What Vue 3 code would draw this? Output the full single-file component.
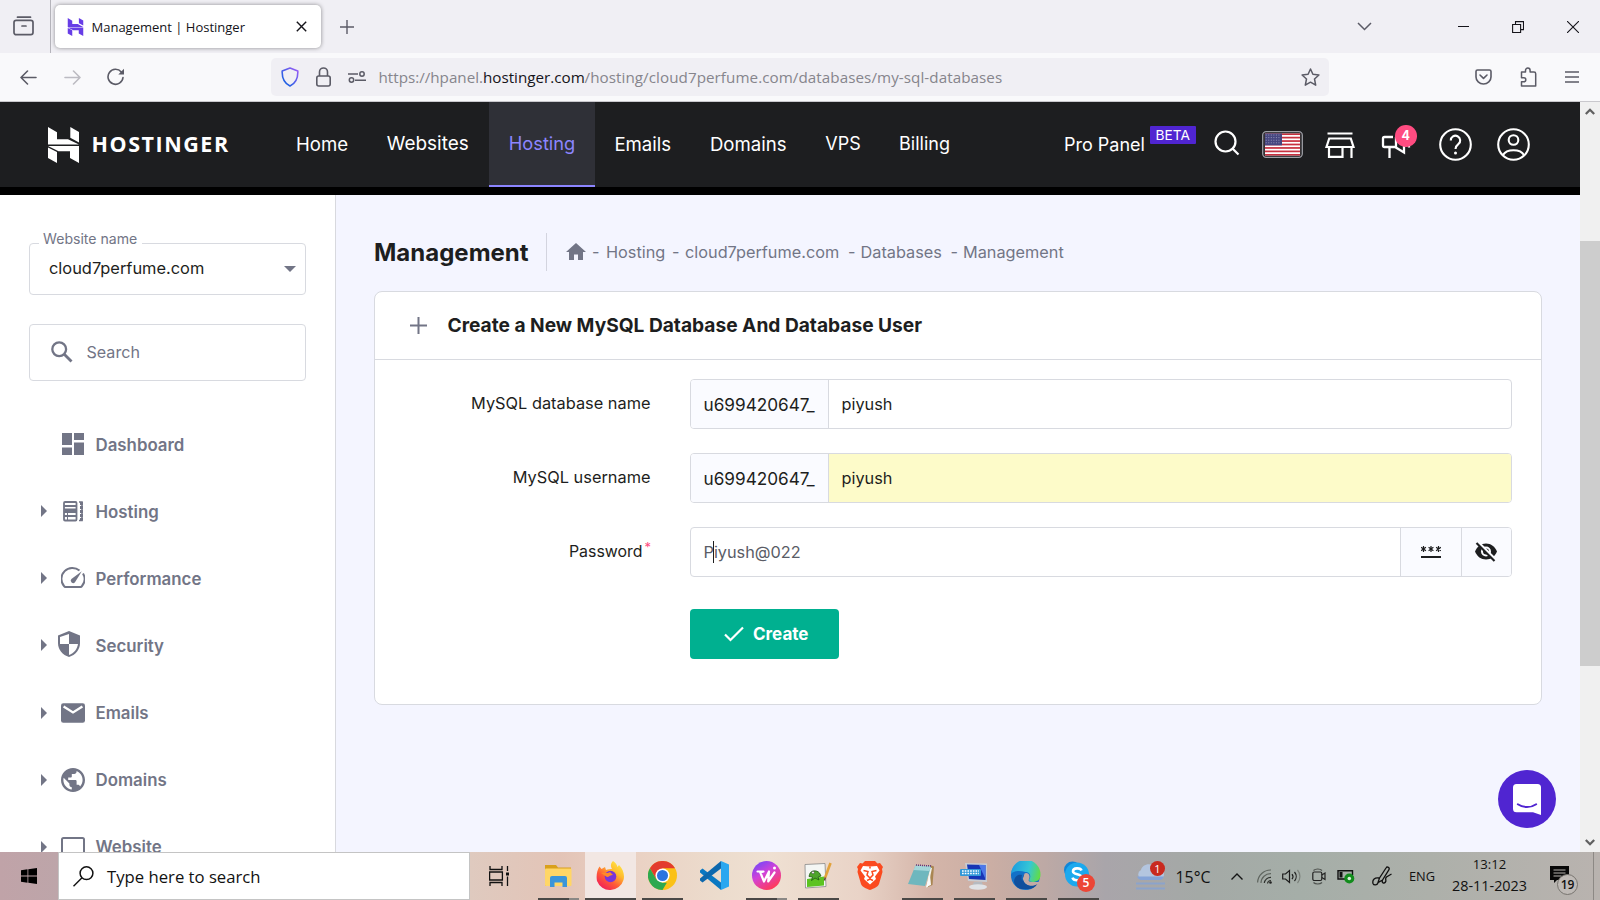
<script setup>
const navLinks = [
  { label: 'Home', width: 91 },
  { label: 'Websites', width: 120.5 },
  { label: 'Hosting', width: 106, active: true },
  { label: 'Emails', width: 95.5 },
  { label: 'Domains', width: 115.5 },
  { label: 'VPS', width: 74 },
  { label: 'Billing', width: 89 },
]
const menu = ['Dashboard', 'Hosting', 'Performance', 'Security', 'Emails', 'Domains', 'Website']
const stripes = [0, 2, 4, 6, 8, 10, 12]
</script>

<template>
  <div class="screen">
    <!-- Browser tabs -->
    <div class="tabbar">
      <div class="view-cell">
        <svg width="22" height="20" viewBox="0 0 22 20" fill="none" stroke="#5b5b66" stroke-width="1.7" stroke-linecap="round">
          <path d="M4.5 1.2h13" /><path d="M1 8V6.5A2.2 2.2 0 0 1 3.2 4.3h14.6A2.2 2.2 0 0 1 20 6.500V16.500a2.200 2.200 0 0 1-2.200 2.200H3.200A2.200 2.200 0 0 1 1 16.500z" /><path d="M9 10h4" />
        </svg>
      </div>
      <div class="tab">
        <svg class="favicon" width="17" height="18" viewBox="0 0 31 36" fill="#673de6">
          <path d="M0 0 9 5.300V12.200H20L31 18H0z" /><path d="M22.300 0 31 5V15L22.300 10.500z" /><path d="M0 20 9 24.500V36L0 31z" /><path d="M0 19H31V36L22 31V24.500H11z" />
        </svg>
        <span class="tab-title">Management | Hostinger</span>
        <svg width="11" height="11" viewBox="0 0 11 11" stroke="#15141a" stroke-width="1.400"><path d="M.8.8l9.400 9.400M10.200.8.8 10.200" /></svg>
      </div>
      <svg class="new-tab" width="14" height="14" viewBox="0 0 14 14" stroke="#5b5b66" stroke-width="1.400"><path d="M7 0v14M0 7h14" /></svg>
      <div class="window-buttons">
        <svg width="15" height="9" viewBox="0 0 15 9" fill="none" stroke="#5b5b66" stroke-width="1.500"><path d="M1 1l6.500 6.500L14 1" /></svg>
        <svg class="win-min" width="11" height="12" viewBox="0 0 11 12" stroke="#15141a"><path d="M0 5.500h11" /></svg>
        <svg width="12" height="12" viewBox="0 0 12 12" fill="none" stroke="#15141a" stroke-width="1.100"><path d="M.6 3.500h8v8h-8zM3.500 3.500V.6h8v8H8.600" /></svg>
        <svg width="12" height="12" viewBox="0 0 12 12" stroke="#15141a" stroke-width="1.100"><path d="M0 0l12 12M12 0 0 12" /></svg>
      </div>
    </div>

    <!-- Address bar -->
    <div class="toolbar">
      <svg class="nav-back" width="17" height="15" viewBox="0 0 17 15" fill="none" stroke="#5b5b66" stroke-width="1.600" stroke-linecap="round" stroke-linejoin="round"><path d="M7.500 1 1 7.500 7.500 14M1 7.500h15" /></svg>
      <svg class="nav-fwd" width="17" height="15" viewBox="0 0 17 15" fill="none" stroke="#bcbbc2" stroke-width="1.600" stroke-linecap="round" stroke-linejoin="round"><path d="M9.500 1 16 7.500 9.500 14M16 7.500H1" /></svg>
      <svg class="nav-reload" width="18" height="18" viewBox="0 0 18 18" fill="none" stroke="#5b5b66" stroke-width="1.600" stroke-linecap="round"><path d="M16 9.500A7.500 7.500 0 1 1 14.300 4" /><path d="M17 .8v5.700h-5.700z" fill="#5b5b66" stroke="none" /></svg>
      <div class="urlbox">
        <svg class="u-shield" width="18" height="20" viewBox="0 0 18 20" fill="none" stroke-width="1.600" stroke-linejoin="round">
          <defs><linearGradient id="shield" x1="0" y1="1" x2="1" y2="0"><stop offset="0" stop-color="#0060df" /><stop offset="1" stop-color="#a05cf5" /></linearGradient></defs>
          <path stroke="url(#shield)" d="M9 1 16.800 4c.3 6.500-1.500 12-7.800 15C2.700 16 .900 10.500 1.200 4z" />
        </svg>
        <svg class="u-lock" width="15" height="20" viewBox="0 0 15 20" fill="none" stroke="#5b5b66" stroke-width="1.600"><rect x=".8" y="9" width="13.400" height="10" rx="2" /><path d="M3.500 9V5a4 4 0 0 1 8 0v4" /></svg>
        <svg class="u-perm" width="18" height="12" viewBox="0 0 18 12" fill="none" stroke="#5b5b66" stroke-width="1.500"><path d="M0 3h10M7 9.300h11" /><circle cx="14" cy="3" r="2.200" /><circle cx="3.500" cy="9" r="2.200" /></svg>
        <div class="url"><span class="u1">https://hpanel.</span><b>hostinger.com</b><span class="u2">/hosting/cloud7perfume.com/databases/my-sql-databases</span></div>
        <svg class="u-star" width="19" height="19" viewBox="0 0 19 19" fill="none" stroke="#5b5b66" stroke-width="1.500" stroke-linejoin="round"><path d="M9.500 1 11.900 6.300 17.900 7 13.500 11 14.700 17.200 9.500 14.200 4.300 17.200 5.500 11 1.100 7 7.100 6.300z" /></svg>
      </div>
      <div class="tools">
        <svg width="17" height="16" viewBox="0 0 17 16" fill="none" stroke="#5b5b66" stroke-width="1.600" stroke-linecap="round" stroke-linejoin="round"><path d="M2.500 1h12A1.500 1.500 0 0 1 16 2.500V8A7.500 7 0 0 1 1 8V2.500A1.500 1.500 0 0 1 2.500 1z" /><path d="M5 6l3.500 3.400L12 6" /></svg>
        <svg width="17" height="20" viewBox="0 0 17 20" fill="none" stroke="#5b5b66" stroke-width="1.500" stroke-linejoin="round"><path d="M5.500 5V3.400a2.300 2.300 0 0 1 4.600 0V5H14a1.700 1.700 0 0 1 1.700 1.700V19H1.500v-4.200h2.300a2 2 0 0 0 0-4H1.500V5z" /></svg>
        <svg width="14" height="12" viewBox="0 0 14 12" stroke="#5b5b66" stroke-width="1.500"><path d="M0 1h14M0 6h14M0 11h14" /></svg>
      </div>
    </div>

    <!-- Page -->
    <div class="viewport">
      <div class="page">
        <header>
          <div class="brand">
            <svg width="31" height="36" viewBox="0 0 31 36" fill="#fff">
              <path d="M0 0 9 5.300V12.200H20L31 17.500H0z" /><path d="M22.300 0 31 5V15.500L22.300 10.800z" /><path d="M0 20.500 9 25V36L0 31z" /><path d="M0 19H31V36L22 31V24.200H10.500z" />
            </svg>
            <span>HOSTINGER</span>
          </div>
          <nav>
            <a v-for="l in navLinks" :key="l.label" :class="{ active: l.active }" :style="{ width: l.width + 'px' }">{{ l.label }}</a>
          </nav>
          <div class="actions">
            <span class="pro">Pro Panel</span>
            <span class="beta">BETA</span>
            <svg class="a-search" width="26" height="26" viewBox="0 0 26 26" fill="none" stroke="#fff" stroke-width="2.200"><circle cx="11.500" cy="11.500" r="10" /><path d="M18.500 18.500 24.500 24.500" /></svg>
            <svg class="a-flag" width="41" height="27" viewBox="0 0 41 27">
              <rect x=".7" y=".7" width="39.600" height="25.600" rx="3.500" fill="#1d1e20" stroke="#9d9ea5" stroke-width="1.300" />
              <svg x="2.700" y="2.300" width="35.600" height="22.400" viewBox="0 0 35 13" preserveAspectRatio="none">
                <rect width="35" height="13" fill="#fff" />
                <rect v-for="s in stripes" :key="s" :y="s" width="35" height="1" fill="#c8303f" />
                <rect width="17" height="7" fill="#46467f" />
                <path d="M1 1h15M1 2.500h15M1 4h15M1 5.500h15" stroke="#b9bad4" stroke-width=".5" stroke-dasharray="1 1.500" />
              </svg>
            </svg>
            <svg class="a-store" width="30" height="26" viewBox="0 0 30 26" fill="none" stroke="#fff" stroke-width="2.200"><path d="M2.500 1.500h25M4.200 6.500H25.800L28.500 15H1.500zM4 15v9.800h13.500V15M26.500 15v11" /></svg>
            <div class="a-mega">
              <svg width="30" height="26" viewBox="0 0 30 26" fill="none" stroke="#fff" stroke-width="2.300"><path d="M12 5H3.500A1.500 1.500 0 0 0 2 6.500v7A1.500 1.500 0 0 0 3.500 15H14l9 5.500V1M8.500 15v11M15 15V5M28 12v3.500" /></svg>
              <span>4</span>
            </div>
            <svg class="a-help" width="33" height="33" viewBox="0 0 33 33" fill="none" stroke="#fff" stroke-width="2.100"><circle cx="16.500" cy="16.500" r="15.300" /><path d="M11.800 12.500a4.700 4.700 0 1 1 7.500 3.700c-1.700 1.300-2.800 2.200-2.800 4.800" /><circle cx="16.500" cy="25" r="1.500" fill="#fff" stroke="none" /></svg>
            <svg class="a-user" width="33" height="33" viewBox="0 0 33 33" fill="none" stroke="#fff" stroke-width="2.100"><circle cx="16.500" cy="16.500" r="15.300" /><circle cx="16.500" cy="12" r="4.800" /><path d="M6 27c2-3.500 6-4.800 10.500-4.800S25 23.500 27 27" /></svg>
          </div>
        </header>

        <div class="body">
          <aside>
            <div class="select">
              <span class="legend">Website name</span>
              <span class="value">cloud7perfume.com</span>
              <svg width="12" height="6" viewBox="0 0 12 6" fill="#727586"><path d="M0 0h12L6 6z" /></svg>
            </div>
            <div class="search">
              <svg width="22" height="22" viewBox="0 0 22 22" fill="none" stroke="#727586" stroke-width="2.300"><circle cx="8.200" cy="8.200" r="6.900" /><path d="M13 13l7.500 7.500" stroke-width="2.900" /></svg>
              <span>Search</span>
            </div>
            <ul>
              <li v-for="(m, i) in menu" :key="m">
                <span class="caret"><svg v-if="i" width="6" height="12" viewBox="0 0 6 12" fill="#727586"><path d="M0 0 6 6 0 12z" /></svg></span>
                <svg v-if="i === 0" class="mi" width="24" height="24" viewBox="0 0 24 24" fill="#727586"><path d="M1 1h10v12H1zM13 1h10v7H13zM13 10.500h10V23H13zM1 15.500h10V23H1z" /></svg>
                <svg v-else-if="i === 1" class="mi" width="24" height="24" viewBox="0 0 24 24" fill="none" stroke="#727586" stroke-width="1.800"><rect x="3" y="3" width="12.500" height="18.500" rx="1" /><path d="M3 7h12.500M3 10.500h12.500M3 13h12.500M3 17h12.500" /><path d="M4 12h11" stroke-width="2.500" /><path d="M6.500 14v7" stroke-width="1" /><path d="M18 3h3v18.500h-3" stroke-width="1.600" /><path d="M20.500 3v18.500" stroke-width="3" stroke-dasharray="3 1" /></svg>
                <svg v-else-if="i === 2" class="mi" width="24" height="24" viewBox="0 0 24 24" fill="none" stroke="#727586" stroke-width="2"><path d="M18.500 4.500A11 11 0 0 0 3 20q.500 1 1.500 1H19.500q1 0 1.500-1a11 11 0 0 0 1-12.500" /><path d="M20.800 5.300 14 16.300a2.400 2.400 0 0 1-3.600-3.200z" fill="#727586" stroke="none" /></svg>
                <svg v-else-if="i === 3" class="mi shield" width="22" height="26" viewBox="0 0 22 26"><path d="M11 0 22 4.500V12c0 6.500-4.500 12-11 14C4.500 24 0 18.500 0 12V4.500z" fill="#727586" /><path d="M11 3V13H2V6z" fill="#fff" /><path d="M11 13h9c-.7 5-4 9-9 11z" fill="#fff" /></svg>
                <svg v-else-if="i === 4" class="mi" width="24" height="24" viewBox="0 0 24 24"><rect y="2.300" width="24" height="19.500" rx="2.300" fill="#727586" /><path d="M2.600 5.500 12 11.500 21.400 5.500" fill="none" stroke="#fff" stroke-width="2.300" /></svg>
                <svg v-else-if="i === 5" class="mi" width="24" height="24" viewBox="2 2 20 20" fill="#727586"><path d="M12 2C6.480 2 2 6.480 2 12s4.480 10 10 10 10-4.480 10-10S17.520 2 12 2zm-1 17.930c-3.950-.49-7-3.850-7-7.930 0-.62.080-1.210.21-1.790L9 15v1c0 1.100.9 2 2 2v1.930zm6.900-2.540c-.26-.81-1-1.390-1.900-1.390h-1v-3c0-.55-.45-1-1-1H8v-2h2c.55 0 1-.45 1-1V7h2c1.100 0 2-.9 2-2v-.41c2.930 1.190 5 4.060 5 7.410 0 2.080-.8 3.970-2.100 5.390z" /></svg>
                <svg v-else class="mi" width="24" height="24" viewBox="0 0 24 24" fill="none" stroke="#727586" stroke-width="2"><rect x="1" y="3" width="22" height="17" rx="1.500" /></svg>
                <span class="ml">{{ m }}</span>
              </li>
            </ul>
          </aside>

          <main>
            <div class="heading">
              <h1>Management</h1>
              <div class="crumbs">
                <svg width="20" height="17" viewBox="0 0 20 17" fill="#727586"><path d="M10 0 20 9H17v8H12V11.500H8V17H3V9H0z" /></svg>
                <span class="c0">-</span><span class="c1">Hosting</span><span class="c2">-</span><span class="c3">cloud7perfume.com</span><span class="c4">-</span><span class="c5">Databases</span><span class="c6">-</span><span class="c7">Management</span>
              </div>
            </div>
            <section class="card">
              <div class="card-head">
                <svg width="17" height="17" viewBox="0 0 17 17" stroke="#727586" stroke-width="2"><path d="M8.500 0v17M0 8.500h17" /></svg>
                <h2>Create a New MySQL Database And Database User</h2>
              </div>
              <div class="row">
                <label>MySQL database name</label>
                <div class="field"><span class="prefix">u699420647_</span><span class="text">piyush</span></div>
              </div>
              <div class="row">
                <label>MySQL username</label>
                <div class="field"><span class="prefix">u699420647_</span><span class="text auto">piyush</span></div>
              </div>
              <div class="row">
                <label class="req">Password<sup>*</sup></label>
                <div class="field">
                  <span class="text pw">Piyush@022<i></i></span>
                  <span class="btn gen"><svg width="20" height="13" viewBox="0 0 20 13" stroke="#1d1e20"><path stroke-width="1.200" d="M2.500 0v6M.1 1.300l4.800 3.400M4.900 1.300.1 4.700M10 0v6M7.600 1.300l4.800 3.400M12.400 1.300 7.600 4.700M17.500 0v6M15.100 1.300l4.800 3.400M19.900 1.300l-4.800 3.400" /><path d="M0 11h20" stroke-width="2" /></svg></span>
                  <span class="btn eye"><svg width="22" height="20" viewBox="0 0 22 20"><path d="M0 9.500C2 4.500 6 1.500 11 1.500s9 3 11 8c-2 5-6 8-11 8s-9-3-11-8z" fill="#1d1e20" /><circle cx="11" cy="9.500" r="5" fill="#fafbff" /><circle cx="11" cy="9.500" r="3" fill="#1d1e20" /><path d="M3 0 21 18" stroke="#fafbff" stroke-width="2.500" /><path d="M1.500 1 19.500 19" stroke="#1d1e20" stroke-width="2.200" /></svg></span>
                </div>
              </div>
              <button><svg width="20" height="16" viewBox="0 0 20 16" fill="none" stroke="#fff" stroke-width="2.200"><path d="M1 8.500 6.500 14 19 1.500" /></svg>Create</button>
            </section>
            <div class="chat">
              <svg width="28" height="31" viewBox="0 0 28 31"><path d="M3.500 0h21A3.500 3.500 0 0 1 28 3.500V31l-8-2.800H3.500A3.500 3.500 0 0 1 0 24.700V3.500A3.500 3.500 0 0 1 3.500 0z" fill="#fff" /><path d="M4.800 20.200c5.500 3.800 12.900 3.800 18.400 0" fill="none" stroke="#5025d1" stroke-width="1.900" stroke-linecap="round" /></svg>
            </div>
          </main>
        </div>
      </div>
      <div class="scrollbar">
        <svg width="10" height="7" viewBox="0 0 10 7" fill="none" stroke="#606060" stroke-width="2.300"><path d="M.8 6 5 1.800 9.200 6" /></svg>
        <div class="thumb"></div>
        <svg class="down" width="10" height="7" viewBox="0 0 10 7" fill="none" stroke="#606060" stroke-width="2.300"><path d="M.8 1 5 5.200 9.200 1" /></svg>
      </div>
    </div>

    <!-- Taskbar -->
    <footer>
      <div class="start"><svg width="16" height="16" viewBox="0 0 16 16"><path d="M0 2.200 6.500 1.300V7.600H0zM7.300 1.200 16 0V7.600H7.300zM0 8.400H6.500V14.700L0 13.800zM7.300 8.400H16V16L7.300 14.800z" /></svg></div>
      <div class="tsearch">
        <svg width="21" height="21" viewBox="0 0 21 21" fill="none" stroke="#111" stroke-width="1.500"><circle cx="13.500" cy="7.200" r="6.400" /><path d="M9 11.800.5 20.300" /></svg>
        <span>Type here to search</span>
      </div>
      <div class="app view"><svg width="20" height="20" viewBox="0 0 20 20" fill="none" stroke="#111" stroke-width="1.300"><path d="M1 0v3.500h12V0M1 20v-3.500h12V20M.6 6h12.800v8H.6zM18.500 0v5M18.500 10.500v9.500" /><rect x="17" y="6.500" width="3" height="3" fill="#111" stroke="none" /></svg></div>
      <div class="app on multi"><svg width="27" height="22" viewBox="0 0 27 22"><path d="M0 0H11l2 2.500h13V20.500H0z" fill="#d9a01c" /><rect y="3.500" width="26.500" height="17.500" rx="1" fill="#ffd666" /><path d="M5 22V13a2 2 0 0 1 2-2H20a2 2 0 0 1 2 2v9H17.500V17.500H9.500V22z" fill="#3b95d9" /></svg></div>
      <div class="app on current"><svg width="29" height="29" viewBox="0 0 29 29">
        <defs><linearGradient id="ff" x1=".9" y1="0" x2=".2" y2="1"><stop offset="0" stop-color="#fff04a" /><stop offset=".35" stop-color="#ffbd2e" /><stop offset=".65" stop-color="#ff5b36" /><stop offset="1" stop-color="#f0185c" /></linearGradient></defs>
        <path d="M17 0c3 2 4 4 4.500 6l1.500-2c4 4 6 10 4.500 15A14 14 0 0 1 1 20C0 15 1 9 3.500 5.500L5.500 8 9 6l1 3c2-1 4-1 6-1-2-3-1-6 1-8z" fill="url(#ff)" /><circle cx="14.500" cy="15.500" r="5.800" fill="#7a35d8" /><path d="M5 12c4-1 6 1 9-1l3 3c-3 0-4 2-6 2z" fill="#ff8a28" /></svg></div>
      <div class="app on"><svg width="29" height="29" viewBox="0 0 30 30"><circle cx="15" cy="15" r="15" fill="#fbc116" /><path d="M15 15 8.500 18.800 2 7.500A15 15 0 0 1 28 7.500H15z" fill="#e33b2e" /><path d="M2 7.500 8.500 18.800 15 22.500H19.500L15 30A15 15 0 0 1 2 7.500z" fill="#2da94f" /><circle cx="15" cy="15" r="7.300" fill="#fff" /><circle cx="15" cy="15" r="5.700" fill="#2d74e0" /></svg></div>
      <div class="app"><svg width="29" height="29" viewBox="0 0 29 29"><path d="M21 0 29 3.500V25.500L21 29 6 15z" fill="none" /><path d="M0 9.500 2.500 7.500 21 21.500V29L0 11.500z" fill="#0a78c2" /><path d="M0 19.500 2.500 21.500 21 7.500V0L0 17.500z" fill="#0d68ad" /><path d="M21 0 29 3.500V25.500L21 29z" fill="#2aa7f0" /></svg></div>
      <div class="app on multi"><svg width="29" height="29" viewBox="0 0 29 29"><defs><linearGradient id="wps" x1="0" y1="0" x2=".6" y2="1"><stop offset="0" stop-color="#6048ff" /><stop offset=".5" stop-color="#d142d8" /><stop offset="1" stop-color="#ff3b5c" /></linearGradient></defs><circle cx="14.500" cy="14.500" r="14.500" fill="url(#wps)" /><path d="M5.500 10.500H11.500L8.300 11.500 12 20.500 17 10.500 16.200 20.500 22.500 11.500" fill="none" stroke="#fff" stroke-width="2.200" stroke-linejoin="round" stroke-linecap="round" /><circle cx="22.500" cy="7" r="1.500" fill="#fff" /></svg></div>
      <div class="app on"><svg width="28" height="27" viewBox="0 0 28 27"><path d="M1 2.500 21 1.500 22 24.500 1.500 26z" fill="#f4f6f4" stroke="#888" stroke-width=".8" /><path d="M3 17 20 14.500V23.500L3 25z" fill="#5cc321" /><path d="M5.500 12.500c1-4 7-5 10-1.500l1.500 3-3 1 1 3-4-2-3.500 2.500 1-3.500-3.500-.5z" fill="#4ea52b" stroke="#205c14" stroke-width=".8" /><circle cx="9" cy="10.500" r="1.300" fill="#fff" stroke="#333" stroke-width=".5" /><path d="M21 16 26.500 1" stroke="#e2a23b" stroke-width="2.600" /><path d="M20.500 18.500l.7-3" stroke="#5c4630" stroke-width="1.500" /></svg></div>
      <div class="app"><svg width="26" height="29" viewBox="0 0 26 29"><path d="M8 0h10l2.500 2.500 2.500-.5 3 4-1 2 .5 3-3.500 12c-1 3-5 4.500-9 6-4-1.500-8-3-9-6L.5 11 1 8 0 6l3-4 2.500.5z" fill="#fb4a1f" /><path d="M13 5.500 20 5l2.500 4.500-4.500 6 1 2.500-6 5.500-6-5.500 1-2.500-4.500-6L6 5z" fill="#fff" /><path d="M6.500 9.500 11 10.500 10 14l3 3 3-3-1-3.500 4.500-1M10 19.500l3-1.500 3 1.500M13 5.500v2" fill="none" stroke="#fb4a1f" stroke-width="1.500" /></svg></div>
      <div class="app on"><svg width="28" height="26" viewBox="0 0 28 26"><path d="M22 2 26 3.500 24.500 22 18 25z" fill="#a98652" /><path d="M8 3 22 3 18 25 20 24 24 5z" fill="#f1f1ea" /><path d="M7.500 2.500 23 3.500 17 23 0 21z" fill="#6fb7be" /><path d="M7.500 2.500 23 3.500 21.500 8 5.500 7z" fill="#a5d6da" /><path d="M18 24l4-12 1 10z" fill="#fafafa" /><path d="M8 2 23 3" stroke="#637" stroke-width="1.500" stroke-dasharray="1 1" /></svg></div>
      <div class="app on"><svg width="28" height="28" viewBox="0 0 28 28"><path d="M5 1 27 1.500 27 20 8 19z" fill="#c8ccd2" /><path d="M7 2.500 25.500 3V18L9 17z" fill="#1736b5" /><path d="M19 3l6.500 0V17z" fill="#4c78ea" /><path d="M14 20h8l1 4H12z" fill="#b6bac0" /><ellipse cx="18" cy="25" rx="9" ry="2.700" fill="#e0e2e6" /><rect y="7" width="21" height="7" rx="1" fill="#3298d8" /><path d="M2 9h17M2 11.500h17" stroke="#fff" stroke-width="1.300" stroke-dasharray="1.700 1" /></svg></div>
      <div class="app on"><svg width="30" height="29" viewBox="0 0 30 29"><defs><linearGradient id="eg" x1="0" y1=".3" x2="1" y2=".5"><stop offset="0" stop-color="#1c9be0" /><stop offset=".6" stop-color="#35c6d6" /><stop offset="1" stop-color="#60dc4a" /></linearGradient></defs><circle cx="14.500" cy="14.500" r="14.500" fill="#1271c8" /><path d="M0 13A14.600 14.600 0 0 1 29.500 14c0 5-4 7-8 7-3 0-4-1.500-3-3 2-3 0-7-4-7C8 9 2 10 0 13z" fill="url(#eg)" /><path d="M11 14c-2 6 3 12 10 11-6 5-16 4-18-4 0-5 3-8 8-7z" fill="#0f4f9d" /><path d="M13 13c3-3 7 1 5 5-1 2 0 3 3 3h7l1 1-3 3c-7 2-15-2-14-9z" fill="#c3aba5" /><path d="M13.500 12.500C10 16 12 23 18 24.500c3 .7 6 0 8.500-1.500-4 6-13 7-17 2" fill="#0f4f9d" /></svg></div>
      <div class="app on skype"><svg width="29" height="29" viewBox="0 0 29 29"><circle cx="8.500" cy="9" r="8.500" fill="#0f86d8" /><circle cx="18" cy="18" r="8.500" fill="#0a79d0" /><circle cx="13" cy="13.500" r="12" fill="#1ba9ee" /><path d="M17.500 9.500c-1-3-8.500-3-8.500.700 0 4 8.500 2 8.500 6 0 4-8 4-9 .5" fill="none" stroke="#fff" stroke-width="2.600" /></svg><span class="sb">5</span></div>
      <div class="weather">
        <svg width="30" height="28" viewBox="0 0 30 28"><path d="M5 17a5 5 0 0 1 0-9C6 2 15 0 19 5c5-1 9 3 9 7s-2 5-4 5z" fill="#b3c5df" /><path d="M1 14.500h27a5 5 0 0 1-4 3.500H5a5 5 0 0 1-4-3.500z" fill="#84a3d8" /><path d="M0 21.500h29M0 26.500h29" stroke="#8ba3cb" stroke-width="2" /></svg>
        <span class="wb">1</span>
      </div>
      <span class="temp">15°C</span>
      <svg class="t-up" width="12" height="7" viewBox="0 0 12 7" fill="none" stroke="#151515" stroke-width="1.400"><path d="M.5 6.500 6 1l5.500 5.500" /></svg>
      <svg class="t-wifi" width="15" height="15" viewBox="0 0 15 15" fill="none" stroke="#30332f" stroke-width="1.200"><g stroke="#5f655f"><path d="M.6 13.500A13 13 0 0 1 14 1" /><path d="M4 14A9.500 9.500 0 0 1 14 4.700" /></g><path d="M7.300 14A6.500 6.500 0 0 1 14 8.300M10.500 14.500A3.500 3.500 0 0 1 14 11.500" /><circle cx="13.500" cy="13.500" r="1.300" fill="#222" stroke="none" /></svg>
      <svg class="t-vol" width="19" height="15" viewBox="0 0 19 15" fill="none" stroke="#1c1c1c" stroke-width="1.200"><path d="M.7 5H3.500L7.500 1.500V13.500L3.500 10H.7z" /><path d="M10 5a4 4 0 0 1 0 5M12.500 3a7 7 0 0 1 0 9" /><path d="M15.500 1a10 10 0 0 1 0 13" stroke="#7b817b" /></svg>
      <svg class="t-meet" width="14" height="17" viewBox="0 0 14 17" fill="none" stroke="#222" stroke-width="1.200"><rect x=".8" y="4" width="9" height="8.500" rx="1.500" /><path d="M9.800 7 13 5v6.500L9.800 9.500" /><path d="M1.500 2.500C3.500.5 8 .5 10 2.500M1.500 14.500c2 2 6.500 2 8.500 0" stroke="#4d514d" /></svg>
      <svg class="t-bat" width="18" height="15" viewBox="0 0 18 15"><path d="M15.500 6V1.700H1V10h8" fill="none" stroke="#111" stroke-width="1.400" /><path d="M2.500 3h3v5.500h-3z" fill="#111" /><circle cx="12.300" cy="9.500" r="5" fill="#128c1c" /><circle cx="12.300" cy="9.500" r="1.800" fill="#d8f0d8" /></svg>
      <svg class="t-pen" width="21" height="21" viewBox="0 0 21 21" fill="none" stroke="#111" stroke-width="1.300"><path d="M6 16.500 7.500 12 14 2a1.700 1.700 0 0 1 3 1.700L10.500 14zM7 12C3 11 0 14 1 17.500c.7 2 4 2 5-.5M10.500 14c-1 3 1.500 4 3 2 1.200-2-1-3 1-5l5-3" /></svg>
      <span class="lang">ENG</span>
      <div class="clock"><span>13:12</span><span>28-11-2023</span></div>
      <div class="notif">
        <svg width="19" height="19" viewBox="0 0 19 19"><path d="M0 0h19v14H7L4 17v-3H0z" fill="#080808" /><path d="M3.500 4h12M3.500 7h12M3.500 10h8" stroke="#b5b2ad" stroke-width="1.100" /></svg>
        <span>19</span>
      </div>
    </footer>
  </div>
</template>

<style>
body { overflow: hidden; }
</style>

<style scoped>
* { box-sizing: border-box; }
.screen { width: 1600px; height: 900px; overflow: hidden; display: flex; flex-direction: column; font-family: Inter, "Liberation Sans", sans-serif; color: #1d1e20; white-space: nowrap; }
svg { display: block; flex: none; }
.screen > div, .screen > footer { flex: none; }

.tabbar { height: 53px; background: #f0eff4; display: flex; align-items: center; }
.view-cell { width: 51px; height: 53px; border-right: 1px solid #b5b4bb; padding: 16px 0 0 13px; }
.tab { width: 266px; height: 43px; margin-left: 4px; background: #fff; border-radius: 5px; box-shadow: 0 0 4px rgba(0, 0, 0, .42); display: flex; align-items: center; padding-left: 12px; }
.tab-title { font: 13px/20px "Open Sans", sans-serif; color: #15141a; width: 204.500px; margin-left: 7.500px; }
.new-tab { margin-left: 19px; }
.window-buttons { margin-left: auto; margin-right: 21px; display: flex; align-items: center; }
.window-buttons svg + svg { margin-left: 43px; }
.window-buttons svg.win-min { margin-left: 86px; }

.toolbar { height: 49px; background: #f9f9fb; border-bottom: 1px solid #c9c8cd; display: flex; align-items: center; }
.nav-back { margin-left: 20px; }
.nav-fwd { margin-left: 26.500px; }
.nav-reload { margin-left: 26.500px; }
.urlbox { width: 1058px; height: 38px; margin-left: 146px; background: #f0eff4; border-radius: 5px; display: flex; align-items: center; padding-left: 9.500px; }
.u-lock { margin-left: 17px; }
.u-perm { margin-left: 17px; }
.url { display: flex; width: 929px; margin-left: 13px; font: 15.200px/24px "Open Sans", sans-serif; color: #86858c; }
.url span, .url b { flex: none; }
.url .u1 { width: 104.500px; }
.url b { font-weight: 400; color: #15141a; width: 101.500px; }
.url .u2 { letter-spacing: .065px; }
.u-star { margin-left: -7px; }
.tools { display: flex; align-items: center; margin-left: auto; margin-right: 21.500px; gap: 28px; }

.viewport { height: 750px; display: flex; overflow: hidden; }
.page { width: 1580px; height: 750px; overflow: hidden; }
header { height: 93px; background: #1d1e20; border-bottom: 8px solid #000; display: flex; align-items: center; }
.brand { display: flex; align-items: center; width: 276.500px; padding-left: 48px; color: #fff; }
.brand span { font: 700 21.500px/30px "Open Sans", sans-serif; letter-spacing: 1.550px; margin: -2px 0 0 12.500px; }
nav { display: flex; height: 85px; }
nav a { display: flex; align-items: center; justify-content: center; color: #fff; font-size: 18.600px; padding-bottom: 2px; }
nav a:first-child { width: 91px; }
nav a:nth-child(2) { font-size: 18.900px; }
nav a:nth-child(6), nav a:nth-child(7) { font-size: 18px; }
nav a.active { background: #2f3037; color: #8c85ff; border-bottom: 2px solid #8c85ff; font-size: 18.300px; margin-left: 1px; }
.actions { display: flex; align-items: center; height: 85px; margin-left: 94.500px; color: #fff; }
.pro { font-size: 18px; width: 86.500px; padding-left: .5px; margin-top: -1px; }
.beta { width: 45.500px; height: 18px; background: #5025d1; border-radius: 1px; font-size: 13.700px; line-height: 18px; text-align: center; margin-top: -19px; }
.a-search { margin-left: 18px; margin-top: -4px; }
.a-flag { margin-left: 22.500px; margin-top: -1px; }
.a-store { margin-left: 22px; }
.a-mega { margin-left: 26px; width: 36px; height: 26px; position: relative; }
.a-mega span { position: absolute; left: 14px; top: -6.500px; width: 21.500px; height: 21.500px; border-radius: 50%; background: #ff4c81; font-size: 12.500px; font-weight: 700; line-height: 21.500px; text-align: center; }
.a-help { margin-left: 22px; margin-top: -1px; }
.a-user { margin-left: 25px; margin-top: -1px; }

.body { display: flex; height: 657px; }
aside { width: 336px; height: 657px; overflow: hidden; border-right: 1px solid #d8d9de; background: #fff; padding: 48px 29px 0; flex: none; }
.select { position: relative; height: 52px; border: 1px solid #d8dae0; border-radius: 4px; display: flex; align-items: center; justify-content: space-between; padding: 0 9px 0 19px; }
.select .value { font-size: 16.400px; padding-bottom: 2px; }
.legend { position: absolute; left: 9px; top: -14px; background: #fff; padding: 0 5px 0 4px; font-size: 14.100px; line-height: 18px; color: #727586; }
.search { margin-top: 29px; height: 57px; border: 1px solid #d8dae0; border-radius: 4px; display: flex; align-items: center; padding-left: 21px; }
.search svg { margin-top: -1px; }
.search span { font-size: 16.100px; color: #727586; margin-left: 13.500px; padding-bottom: 2px; }
ul { list-style: none; margin: 29.500px 0 0; padding: 0; }
li { height: 67.150px; display: flex; align-items: center; color: #727586; }
.caret { width: 31.500px; padding-left: 12px; }
.ml { font-size: 16.850px; font-weight: 600; margin-left: 11px; padding-top: 1px; }
.shield { margin: 0 5px 2px -3px; }

main { width: 1244px; background: #f4f5ff; padding: 38px 0 0 38px; position: relative; }
.heading { height: 38px; display: flex; align-items: center; }
h1 { margin: 0; font-size: 24px; font-weight: 700; width: 173px; height: 38px; line-height: 39px; border-right: 1px solid #d3d4df; }
.crumbs { display: flex; align-items: center; color: #727586; font-size: 16.300px; line-height: 20px; margin-left: 19px; }
.crumbs svg { margin-top: -2px; }
.crumbs span { flex: none; }
.c0 { width: 14px; margin-left: 6px; }
.c1 { width: 66px; }
.c2 { width: 13px; }
.c3 { width: 163px; }
.c4 { width: 12.500px; }
.c5 { width: 90px; }
.c6 { width: 12.500px; }
.c7 { width: 105px; }
.card { width: 1168px; height: 414px; margin-top: 20px; background: #fff; border: 1px solid #d8dae0; border-radius: 8px; }
.card-head { height: 68px; border-bottom: 1px solid #d8dae0; display: flex; align-items: center; padding-left: 35px; margin-bottom: 19px; }
h2 { margin: 0 0 0 20.500px; font-size: 19.150px; font-weight: 700; padding-bottom: 2px; }
.row { display: flex; height: 50px; margin-bottom: 24px; padding-left: 35px; }
label { width: 240.500px; line-height: 48px; font-size: 16.350px; text-align: right; flex: none; }
label.req { font-size: 15.900px; line-height: 50px; }
sup { font-size: 13px; line-height: 10px; color: #ff4c81; vertical-align: 5px; margin-left: 2px; display: inline-block; width: 6px; }
.field { width: 822px; margin-left: 39.500px; border: 1px solid #d8dae0; border-radius: 4px; display: flex; overflow: hidden; font-size: 16.300px; line-height: 49px; }
.prefix { width: 138px; background: #fafbff; border-right: 1px solid #d8dae0; padding-left: 12.500px; font-size: 17.200px; flex: none; }
.text { flex: 1; padding-left: 12.500px; }
.auto { background: #fdfbc9; }
.pw { color: #5a5c66; position: relative; }
.pw i { position: absolute; left: 22px; top: 13px; width: 1px; height: 22px; background: #1d1e20; }
.btn { background: #fafbff; border-left: 1px solid #d8dae0; display: flex; align-items: center; justify-content: center; }
.gen { width: 61px; }
.eye { width: 50px; padding-right: 2px; }
button { width: 149px; height: 50px; margin: 32px 0 0 315px; border: 0; border-radius: 4px; background: #00b090; color: #fff; font: 700 17px Inter, sans-serif; display: flex; align-items: center; padding: 0 0 0 33.500px; gap: 9.500px; }
.chat { position: absolute; left: 1162px; top: 575px; width: 58px; height: 58px; border-radius: 50%; background: #5025d1; display: flex; align-items: center; justify-content: center; }
.scrollbar { width: 20px; background: #f0f0f0; display: flex; flex-direction: column; align-items: center; padding-top: 6px; }
.thumb { width: 20px; height: 425px; margin-top: 126px; background: #cdcdcd; }
.down { margin-top: 173px; }

footer { height: 48px; display: flex; align-items: center; color: #111; font-family: "Open Sans", sans-serif; background: linear-gradient(90deg, #c0a3a8 0, #bda5a9 58px, #dfcabf 470px, #e3c4b7 560px, #ead2c4 640px, #ecdccd 720px, #efe0d2 770px, #e9d3c7 860px, #d4b5a9 930px, #cbaea4 990px, #bda9a5 1045px, #a9a5aa 1105px, #a4a9a6 1200px, #a5aea8 1300px, #adb0aa 1430px, #b9b3af 1600px); }
.start { width: 58px; padding-left: 21px; }
.tsearch { width: 412px; height: 48px; background: #fff; border: 1px solid #c4c4c4; display: flex; align-items: center; padding-left: 14px; }
.tsearch span { font-size: 16.700px; margin-left: 13px; padding-top: 1px; }
.app { width: 52px; height: 48px; display: flex; align-items: center; justify-content: center; position: relative; padding-bottom: 1px; flex: none; }
.app.view { width: 62px; padding-right: 4px; }
.on::after { content: ""; position: absolute; left: 6px; bottom: 0; width: 41px; height: 2px; background: #4a4846; }
.multi::after { background: linear-gradient(90deg, #4a4846 31px, #8b8885 31px); }
.current { width: 51px; margin: 0 0 0 1px; background: #f2e7e3; }
.current::after { left: 0; width: 51px; }
.sb { position: absolute; left: 25px; top: 22px; width: 18px; height: 18px; border-radius: 50%; background: #ec4636; color: #fff; font-size: 12px; font-weight: 600; line-height: 18px; text-align: center; }
.weather { width: 30px; margin-left: 32px; position: relative; }
.wb { position: absolute; left: 14px; top: -1px; width: 15px; height: 15px; border-radius: 50%; background: #c92a1f; color: #fff; font-size: 11px; line-height: 15px; text-align: center; }
.temp { font-size: 15.900px; width: 36px; margin-left: 9.500px; padding-top: 1px; }
.t-up { margin-left: 19.500px; }
.t-wifi { margin-left: 14px; }
.t-vol { margin-left: 10px; }
.t-meet { margin-left: 11px; }
.t-bat { margin-left: 11px; }
.t-pen { margin-left: 17px; }
.lang { font-size: 12.800px; width: 27px; margin-left: 16px; }
.clock { width: 76px; margin-left: 15.500px; font-size: 13.100px; line-height: 22px; text-align: center; display: flex; flex-direction: column; padding-bottom: 2px; }
.clock span + span { font-size: 14.400px; }
.notif { width: 44px; height: 48px; margin-left: 22.500px; border-right: 1px solid #8d8985; padding-top: 14px; position: relative; }
.notif span { position: absolute; left: 7px; top: 21.500px; width: 21px; height: 21px; border-radius: 50%; border: 1px solid #77746f; background: #bfbab6; font-size: 12px; font-weight: 600; line-height: 19px; text-align: center; }
</style>
